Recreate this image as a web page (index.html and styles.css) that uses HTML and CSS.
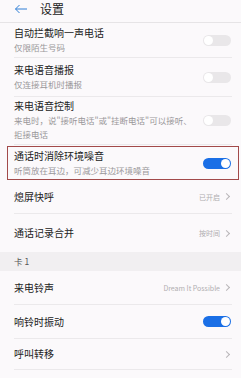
FILE: index.html
```html
<!DOCTYPE html>
<html lang="zh-CN">
<head>
    <meta charset="UTF-8">
    <meta name="viewport" content="width=device-width, initial-scale=1.0">
    <title>设置</title>
    <link rel="stylesheet" href="styles.css">
</head>
<body>
    <div class="topbar">
        <svg class="back" width="14" height="10" viewBox="0 0 14 10">
            <path d="M13 5H1.5M5.5 1L1.5 5L5.5 9" fill="none" stroke="#2f7fd6" stroke-width="1"/>
        </svg>
        <span class="title">设置</span>
    </div>

    <div class="row r1">
        <div class="text">
            <div class="name">自动拦截响一声电话</div>
            <div class="sub">仅限陌生号码</div>
        </div>
        <span class="toggle"></span>
    </div>
    <div class="row r2">
        <div class="text">
            <div class="name">来电语音播报</div>
            <div class="sub">仅连接耳机时播报</div>
        </div>
        <span class="toggle"></span>
    </div>
    <div class="row r3">
        <div class="text">
            <div class="name">来电语音控制</div>
            <div class="sub">来电时，说"接听电话"或"挂断电话"可以接听、拒接电话</div>
        </div>
        <span class="toggle"></span>
    </div>
    <div class="row r4 marked">
        <div class="text">
            <div class="name">通话时消除环境噪音</div>
            <div class="sub">听筒放在耳边，可减少耳边环境噪音</div>
        </div>
        <span class="toggle on"></span>
    </div>
    <div class="row r5">
        <div class="name">熄屏快呼</div>
        <span class="value">已开启<i class="chev"></i></span>
    </div>
    <div class="row r6 last">
        <div class="name">通话记录合并</div>
        <span class="value">按时间<i class="chev"></i></span>
    </div>

    <div class="section">卡 1</div>

    <div class="row r7">
        <div class="name">来电铃声</div>
        <span class="value">Dream It Possible<i class="chev"></i></span>
    </div>
    <div class="row r8">
        <div class="name">响铃时振动</div>
        <span class="toggle on"></span>
    </div>
    <div class="row r9">
        <div class="name">呼叫转移</div>
        <span class="value"><i class="chev"></i></span>
    </div>
</body>
</html>
```

FILE: styles.css
```css
html {
    background-color: #fbf9fb;
}

body {
    margin: 0;
    width: 241px;
    font-family: "Noto Sans CJK SC", "Noto Sans", sans-serif;
    color: #222;
}

.topbar {
    display: flex;
    align-items: center;
    height: 22px;
    border-bottom: 1px solid #e6e4e6;
}

.back {
    margin-left: 14px;
    margin-top: -4px;
}

.title {
    margin-left: 12px;
    margin-top: -5px;
    font-size: 12px;
}

.row {
    display: flex;
    align-items: center;
    justify-content: space-between;
    margin: 0 9px 0 14px;
    border-bottom: 1px solid #ebe9eb;
}

.row.last {
    border-bottom: none;
}

.r1 { height: 34px; }
.r2 { height: 38px; }
.r3 { height: 47px; }
.r5 { height: 33px; }
.r6 { height: 38px; }
.r7 { height: 33px; }
.r8 { height: 33px; }
.r9 { height: 30px; }

.marked {
    height: 32px;
    margin: 1px 2px 0 7px;
    padding: 0 6px 0 6px;
    border: 1px solid #a24a4a;
}

.text {
    display: flex;
    flex-direction: column;
}

.name {
    font-size: 10px;
    line-height: 14px;
}

.sub {
    font-size: 8.5px;
    line-height: 14px;
    color: #9a989a;
    max-width: 185px;
}

.r3 .text {
    margin-top: -2px;
}

.toggle {
    position: relative;
    flex: none;
    width: 28px;
    height: 11px;
    margin-right: 1px;
    border-radius: 6px;
    background-color: #e9e7e9;
}

.toggle::after {
    content: "";
    position: absolute;
    left: 1px;
    top: 1px;
    width: 9px;
    height: 9px;
    border-radius: 50%;
    background-color: #fff;
}

.toggle.on {
    background-color: #1a6fe6;
}

.toggle.on::after {
    left: auto;
    right: 1px;
}

.value {
    display: flex;
    align-items: center;
    font-size: 7px;
    color: #b0aeb0;
}

.chev {
    width: 4px;
    height: 4px;
    margin-left: 4px;
    margin-right: 3px;
    border-top: 1px solid #b8b6b8;
    border-right: 1px solid #b8b6b8;
    transform: rotate(45deg);
}

.section {
    height: 19px;
    line-height: 19px;
    padding-left: 14px;
    font-size: 8.5px;
    color: #555;
    background-color: #f1eff1;
}
```
